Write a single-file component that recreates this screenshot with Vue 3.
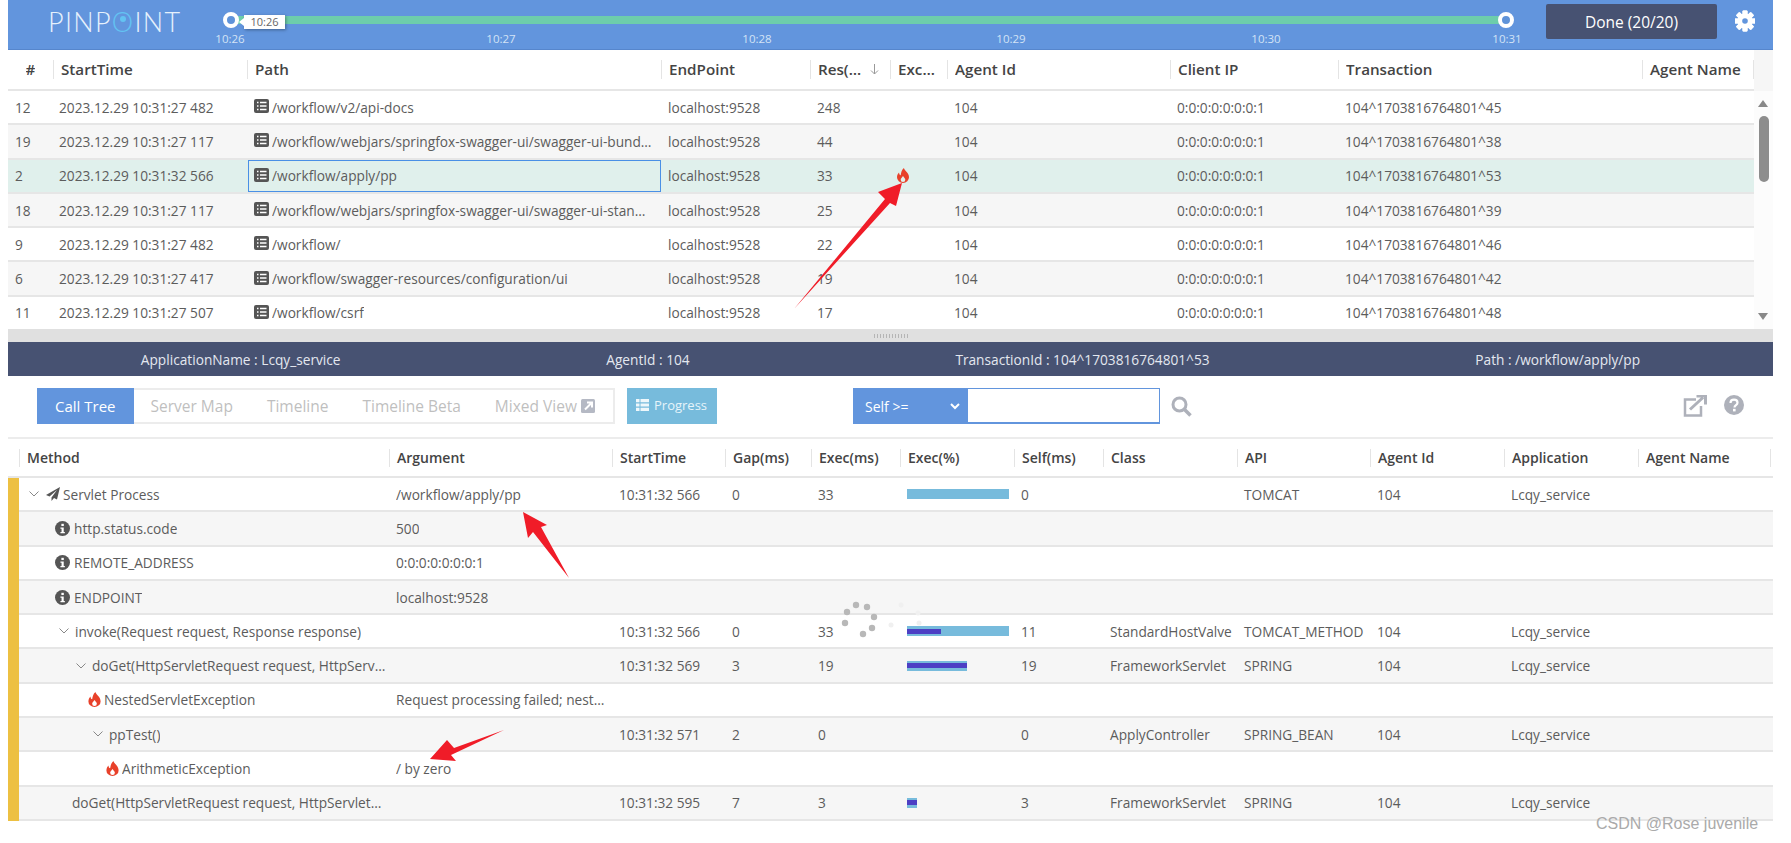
<script setup>
const ticks = [
  { t: '10:26', x: 0 },
  { t: '10:27', x: 271 },
  { t: '10:28', x: 527 },
  { t: '10:29', x: 781 },
  { t: '10:30', x: 1036 },
  { t: '10:31', x: 1277 }
]
const listHead = ['#', 'StartTime', 'Path', 'EndPoint', 'Res(ms)', 'Exception', 'Agent Id', 'Client IP', 'Transaction', 'Agent Name']
const listRows = [
  ['12', '2023.12.29 10:31:27 482', '/workflow/v2/api-docs', '248', false, '45'],
  ['19', '2023.12.29 10:31:27 117', '/workflow/webjars/springfox-swagger-ui/swagger-ui-bundle.js', '44', false, '38'],
  ['2', '2023.12.29 10:31:32 566', '/workflow/apply/pp', '33', true, '53'],
  ['18', '2023.12.29 10:31:27 117', '/workflow/webjars/springfox-swagger-ui/swagger-ui-standalone-preset.js', '25', false, '39'],
  ['9', '2023.12.29 10:31:27 482', '/workflow/', '22', false, '46'],
  ['6', '2023.12.29 10:31:27 417', '/workflow/swagger-resources/configuration/ui', '19', false, '42'],
  ['11', '2023.12.29 10:31:27 507', '/workflow/csrf', '17', false, '48']
]
const summary = ['ApplicationName : Lcqy_service', 'AgentId : 104', 'TransactionId : 104^1703816764801^53', 'Path : /workflow/apply/pp']
const tabs = ['Server Map', 'Timeline', 'Timeline Beta']
const treeHead = ['Method', 'Argument', 'StartTime', 'Gap(ms)', 'Exec(ms)', 'Exec(%)', 'Self(ms)', 'Class', 'API', 'Agent Id', 'Application', 'Agent Name']
const treeRows = [
  { pad: 10, icon: 'plane', chev: true, m: 'Servlet Process', a: '/workflow/apply/pp', s: '10:31:32 566', g: '0', e: '33', self: '0', bar: 102, dark: 0, c: '', api: 'TOMCAT', id: '104', app: 'Lcqy_service' },
  { pad: 36, icon: 'info', m: 'http.status.code', a: '500' },
  { pad: 36, icon: 'info', m: 'REMOTE_ADDRESS', a: '0:0:0:0:0:0:0:1' },
  { pad: 36, icon: 'info', m: 'ENDPOINT', a: 'localhost:9528' },
  { pad: 40, chev: true, m: 'invoke(Request request, Response response)', a: '', s: '10:31:32 566', g: '0', e: '33', self: '11', bar: 102, dark: 34, c: 'StandardHostValve', api: 'TOMCAT_METHOD', id: '104', app: 'Lcqy_service' },
  { pad: 57, chev: true, m: 'doGet(HttpServletRequest request, HttpServletResponse response)', a: '', s: '10:31:32 569', g: '3', e: '19', self: '19', bar: 60, dark: 60, c: 'FrameworkServlet', api: 'SPRING', id: '104', app: 'Lcqy_service' },
  { pad: 69, icon: 'fire', m: 'NestedServletException', a: 'Request processing failed; nested exception is java.lang.ArithmeticException' },
  { pad: 74, chev: true, m: 'ppTest()', a: '', s: '10:31:32 571', g: '2', e: '0', self: '0', bar: 0, dark: 0, c: 'ApplyController', api: 'SPRING_BEAN', id: '104', app: 'Lcqy_service' },
  { pad: 87, icon: 'fire', m: 'ArithmeticException', a: '/ by zero' },
  { pad: 53, m: 'doGet(HttpServletRequest request, HttpServletResponse response)', a: '', s: '10:31:32 595', g: '7', e: '3', self: '3', bar: 10, dark: 10, c: 'FrameworkServlet', api: 'SPRING', id: '104', app: 'Lcqy_service', tight: true }
]
const gearTeeth = [0, 45, 90, 135, 180, 225, 270, 315]
const flame = 'M7.500 0c.6 3 5.500 5 5.500 10a6.500 6 0 0 1-13 0c0-2.200 1-4 2.200-5.200.1 1.800.8 2.700 1.800 3C4.500 5 5 2 7.500 0zM6.500 8.500C5.500 10.300 4 11 4 12.500a2.500 2.500 0 0 0 5 0C9 11 7.500 10.300 6.500 8.500z'
const dots = [[856, 605], [867, 607], [874, 617], [872, 628], [863, 634], [845, 623], [847, 612]]
const faintDots = [[901, 605], [918, 613], [919, 623], [891, 625]]
</script>

<template>
  <div class="page">
    <header class="topbar">
      <div class="logo">PINP<span class="logo-o">O</span>INT</div>
      <div class="timeline">
        <div class="track"></div>
        <div class="knob knob-start"></div>
        <div class="knob knob-end"></div>
        <div class="tip">10:26</div>
        <span v-for="k in ticks" :key="k.t" class="tick" :style="{ left: k.x + 'px' }">{{ k.t }}</span>
      </div>
      <button class="done">Done (20/20)</button>
      <svg class="gear" viewBox="0 0 20 22" width="20" height="22">
        <g fill="#fff">
          <rect v-for="a in gearTeeth" :key="a" x="7.500" y="0.500" width="5" height="21" rx="1" :transform="`rotate(${a} 10 11)`" />
          <circle cx="10" cy="11" r="7.500" />
        </g>
        <circle cx="10" cy="11" r="2.800" fill="#6295dd" />
      </svg>
    </header>

    <section class="list">
      <div class="list-main">
        <div class="list-grid list-head">
          <div v-for="(h, i) in listHead" :key="h" class="hcell" :class="{ 'hcell-num': i === 0, 'hcell-last': i === 9 }">
            <span class="hlabel">{{ h }}</span>
            <svg v-if="i === 4" class="sort" viewBox="0 0 9 11" width="9" height="11"><path d="M4.500 0v10M1 6.500l3.500 3.500L8 6.500" fill="none" stroke="#999" stroke-width="1" /></svg>
          </div>
        </div>
        <div v-for="(r, i) in listRows" :key="r[0]" class="list-grid list-row" :class="{ even: i % 2 === 1, sel: r[4] }">
          <div class="cell">{{ r[0] }}</div>
          <div class="cell cell-time">{{ r[1] }}</div>
          <div class="cell path" :class="{ focus: r[4] }">
            <svg class="doc" viewBox="0 0 15 14" width="15" height="14">
              <rect width="15" height="14" rx="2" fill="#555" />
              <path d="M3 3.500h1.500M3 7h1.500M3 10.500h1.500M6 3.500h6.500M6 7h6.500M6 10.500h6.500" stroke="#fff" stroke-width="1.500" />
            </svg>
            <span class="ellip">{{ r[2] }}</span>
          </div>
          <div class="cell">localhost:9528</div>
          <div class="cell">{{ r[3] }}</div>
          <div class="cell exc">
            <svg v-if="r[4]" viewBox="0 0 13 16" width="12" height="15"><path :d="flame" fill="#e8412a" fill-rule="evenodd" /></svg>
          </div>
          <div class="cell">104</div>
          <div class="cell">0:0:0:0:0:0:0:1</div>
          <div class="cell">104^1703816764801^{{ r[5] }}</div>
          <div class="cell"></div>
        </div>
      </div>
      <div class="scroll">
        <div class="scroll-corner"></div>
        <div class="arrow-up"></div>
        <div class="thumb"></div>
        <div class="arrow-down"></div>
      </div>
    </section>

    <div class="splitter"><span class="grip"></span></div>

    <div class="summary">
      <span v-for="s in summary" :key="s">{{ s }}</span>
    </div>

    <div class="toolbar">
      <div class="tabs">
        <span class="tab active">Call Tree</span>
        <span v-for="t in tabs" :key="t" class="tab">{{ t }}</span>
        <span class="tab">Mixed View
          <svg class="tab-ico" viewBox="0 0 14 14" width="14" height="14">
            <rect width="14" height="14" rx="1.500" fill="#b5b9c4" />
            <path d="M4 10.500 10 4.500M6 3.500h5v5" fill="none" stroke="#fff" stroke-width="2" />
          </svg>
        </span>
      </div>
      <button class="progress">
        <svg viewBox="0 0 13 12" width="13" height="12"><path d="M0 0h3.500v3.200H0zM4.500 0H13v3.200H4.500zM0 4.400h3.500v3.200H0zM4.500 4.400H13v3.200H4.500zM0 8.800h3.500V12H0zM4.500 8.800H13V12H4.500z" fill="#eef7fb" /></svg>
        Progress
      </button>
      <div class="filter">
        <div class="filter-sel">
          <span>Self &gt;=</span>
          <svg viewBox="0 0 10 7" width="10" height="7"><path d="M1 1l4 4 4-4" fill="none" stroke="#fff" stroke-width="2" /></svg>
        </div>
        <div class="filter-input"></div>
      </div>
      <svg class="search" viewBox="0 0 21 21" width="21" height="21">
        <circle cx="8.500" cy="8.500" r="6.500" fill="none" stroke="#aeb1ba" stroke-width="3" />
        <path d="M13.500 13.500 19.500 19.500" stroke="#aeb1ba" stroke-width="3.500" />
      </svg>
      <div class="tool-right">
        <svg viewBox="0 0 24 22" width="24" height="22">
          <path d="M13 4.500H2v16h16V11" fill="none" stroke="#aeb1ba" stroke-width="2.500" />
          <path d="M7 14.500 20 2.500M13.500 1h9v8.500" fill="none" stroke="#aeb1ba" stroke-width="3" />
        </svg>
        <svg viewBox="0 0 20 20" width="20" height="20">
          <circle cx="10" cy="10" r="10" fill="#aeb1ba" />
          <path d="M6.500 8c0-2 1.500-3.300 3.500-3.300S13.500 6 13.500 7.800c0 2.400-3 2.400-3 4.700" fill="none" stroke="#fff" stroke-width="2.200" />
          <rect x="9" y="13.800" width="2.600" height="2.600" fill="#fff" />
        </svg>
      </div>
    </div>

    <section class="tree">
      <div class="tree-grid tree-head">
        <div class="bar-gap"></div>
        <div v-for="h in treeHead" :key="h" class="thcell">{{ h }}</div>
      </div>
      <div v-for="(r, i) in treeRows" :key="i" class="tree-grid tree-row" :class="{ even: i % 2 === 1 }">
        <div class="yellow"></div>
        <div class="cell method" :class="{ tight: r.tight }" :style="{ paddingLeft: r.pad + 'px' }">
          <svg v-if="r.chev" class="chev" viewBox="0 0 10 6" width="10" height="6"><path d="M.5.500 5 5 9.500.500" fill="none" stroke="#888" stroke-width="1" /></svg>
          <svg v-if="r.icon === 'plane'" class="plane" viewBox="0 0 14 14" width="14" height="14"><path d="M14 0 0 8l3.500 1.500L11 3 5.500 10.500V14l2.500-3 3 1.500z" fill="#555" /></svg>
          <svg v-if="r.icon === 'info'" class="info" viewBox="0 0 16 16" width="15" height="15">
            <circle cx="8" cy="8" r="8" fill="#555" />
            <rect x="6.800" y="3" width="2.600" height="2.400" fill="#fff" />
            <path d="M5.800 6.800h3.500v4.800h1.200V13H5.800v-1.400H7V8.200H5.800z" fill="#fff" />
          </svg>
          <svg v-if="r.icon === 'fire'" class="fire" viewBox="0 0 13 16" width="13" height="15"><path :d="flame" fill="#e8412a" fill-rule="evenodd" /></svg>
          <span class="ellip">{{ r.m }}</span>
        </div>
        <div class="cell arg"><span class="ellip">{{ r.a }}</span></div>
        <div class="cell">{{ r.s }}</div>
        <div class="cell">{{ r.g }}</div>
        <div class="cell">{{ r.e }}</div>
        <div class="cell">
          <div v-if="r.bar" class="bar" :style="{ width: r.bar + 'px' }">
            <div class="bar-in" :style="{ width: r.dark + 'px' }"></div>
          </div>
        </div>
        <div class="cell">{{ r.self }}</div>
        <div class="cell">{{ r.c }}</div>
        <div class="cell">{{ r.api }}</div>
        <div class="cell">{{ r.id }}</div>
        <div class="cell">{{ r.app }}</div>
        <div class="cell"></div>
      </div>
    </section>

    <svg class="overlay" viewBox="0 0 1791 843" width="1791" height="843">
      <circle v-for="(d, i) in faintDots" :key="'f' + i" :cx="d[0]" :cy="d[1]" r="2.500" fill="#f0f0f0" />
      <circle v-for="(d, i) in dots" :key="'d' + i" :cx="d[0]" :cy="d[1]" r="3.200" fill="#b8b8b8" />
      <g fill="#f01c28">
        <polygon points="794,309 885,199 878,192 902,183 896,206 890,203" />
        <polygon points="523,512 547,525 541,527 569,578 533,532 528,538" />
        <polygon points="504,730 454,748 447,740 430,759 456,761 451,755" />
      </g>
    </svg>
    <div class="watermark">CSDN @Rose juvenile</div>
  </div>
</template>

<style>
body { margin: 0; background: #fff; overflow: hidden; }
</style>

<style scoped>
.page {
  position: relative;
  width: 1791px;
  height: 843px;
  padding: 0 18px 0 8px;
  box-sizing: border-box;
  overflow: hidden;
  font-family: "Open Sans", "Noto Sans", sans-serif;
  font-size: 13.7px;
  color: #5c5c5c;
}
.topbar {
  height: 50px;
  box-sizing: border-box;
  background: #6295dd;
  border-bottom: 1px solid #5686cc;
  display: flex;
  align-items: flex-start;
}
.logo {
  margin: 8px 0 0 40px;
  width: 182px;
  font-family: "Lato", sans-serif;
  font-weight: 300;
  font-size: 27px;
  letter-spacing: 1.300px;
  line-height: 28px;
  color: #e6f1fc;
  flex: none;
}
.logo-o { color: #63c3f2; position: relative; }
.logo-o::after {
  content: "";
  position: absolute;
  left: 8px;
  top: 11px;
  width: 6px;
  height: 6px;
  border-radius: 50%;
  background: #63c3f2;
}
.timeline { position: relative; flex: 1; height: 49px; }
.track {
  position: absolute;
  left: 1px;
  top: 16px;
  width: 1275px;
  height: 8px;
  background: #6dcdab;
}
.knob {
  position: absolute;
  top: 12px;
  width: 8px;
  height: 8px;
  border: 4px solid #fff;
  border-radius: 50%;
  background: #5f93d9;
}
.knob-start { left: -7px; }
.knob-end { left: 1268px; }
.tip {
  position: absolute;
  left: 14px;
  top: 15px;
  width: 41px;
  height: 14px;
  line-height: 14px;
  background: #fff;
  color: #666;
  text-align: center;
  font-size: 11px;
  box-shadow: 1px 1px 3px rgba(0, 0, 0, .35);
}
.tip::before {
  content: "";
  position: absolute;
  left: -5px;
  top: 3px;
  border-right: 5px solid #fff;
  border-top: 4px solid transparent;
  border-bottom: 4px solid transparent;
}
.tick {
  position: absolute;
  top: 31px;
  width: 0;
  display: flex;
  justify-content: center;
  font-size: 11.500px;
  line-height: 16px;
  color: #d3e3f6;
}
.done {
  flex: none;
  margin: 4px 0 0 0;
  width: 171px;
  height: 35px;
  background: #475272;
  border: 0;
  border-radius: 2px;
  color: #fff;
  font: 400 15.500px "Open Sans", sans-serif;
  padding: 0;
}
.gear { flex: none; margin: 10px 18px 0 18px; }

.list { display: flex; height: 279px; overflow: hidden; }
.list-main { width: 1746px; flex: none; }
.list-grid {
  display: grid;
  grid-template-columns: 45px 194px 414px 149px 80px 57px 223px 168px 304px 112px;
}
.list-head {
  height: 41px;
  box-sizing: border-box;
  border-bottom: 2px solid #e6e6e6;
  align-items: center;
  background: #fff;
}
.hcell {
  height: 19px;
  line-height: 19px;
  border-left: 1px solid #e4e4e4;
  padding: 0 6px 0 7px;
  font-size: 15.200px;
  font-weight: 600;
  color: #444;
  display: flex;
  align-items: center;
  min-width: 0;
}
.hlabel { overflow: hidden; text-overflow: ellipsis; white-space: nowrap; flex: 0 1 auto; min-width: 0; }
.hcell-num { border-left: 0; justify-content: center; padding: 0; }
.hcell-last { border-right: 1px solid #e4e4e4; white-space: nowrap; }
.hcell-last .hlabel { overflow: visible; }
.sort { flex: none; margin-left: 6px; }
.hcell:nth-child(5) { padding-right: 6px; }
.hcell:nth-child(5) .hlabel { width: 46px; flex: none; }
.list-row {
  height: 34.300px;
  box-sizing: border-box;
  border-bottom: 2px solid #e6e6e6;
  background: #fff;
}
.list-row.even { background: #f6f6f6; }
.list-row.sel { background: #e0f0ec; }
.cell {
  min-width: 0;
  padding-left: 7px;
  display: flex;
  align-items: center;
  white-space: nowrap;
}
.cell-time { padding-left: 6px; }
.path {
  padding-left: 5px;
  padding-right: 8px;
  margin-left: 1px;
  border: 1px solid transparent;
}
.path.focus { border-color: #4a90e6; }
.doc { flex: none; margin-right: 3px; margin-top: -2px; }
.ellip { overflow: hidden; text-overflow: ellipsis; white-space: nowrap; min-width: 0; }
.exc { justify-content: flex-start; padding-left: 7px; }
.scroll {
  position: relative;
  width: 19px;
  flex: none;
  background: #fcfcfc;
}
.scroll-corner { position: absolute; left: 0; top: 0; width: 100%; height: 41px; background: #f6f6f6; }
.arrow-up, .arrow-down {
  position: absolute;
  left: 4px;
  border-left: 5px solid transparent;
  border-right: 5px solid transparent;
}
.arrow-up { top: 50px; border-bottom: 7px solid #888; }
.arrow-down { top: 263px; border-top: 7px solid #888; }
.thumb {
  position: absolute;
  left: 5px;
  top: 66px;
  width: 10px;
  height: 66px;
  border-radius: 5px;
  background: #8d8d8d;
}

.splitter {
  height: 13px;
  background: #e0e0e0;
  display: flex;
  align-items: center;
  justify-content: center;
  padding-right: 1px;
}
.grip {
  width: 35px;
  height: 4px;
  background-image: radial-gradient(circle, #b5b5b5 0.800px, transparent 1px);
  background-size: 3px 2px;
}
.summary {
  height: 34px;
  background: #475272;
  color: #e4e8f0;
  display: flex;
  justify-content: space-around;
  align-items: center;
  font-size: 13.700px;
}
.toolbar {
  height: 61px;
  box-sizing: border-box;
  padding: 12px 0 0 29px;
  display: flex;
  align-items: flex-start;
}
.tabs {
  display: flex;
  height: 36px;
  box-sizing: border-box;
  border: 2px solid #ececec;
  border-left: 0;
  width: 578px;
  flex: none;
}
.tab {
  padding: 0 17px;
  line-height: 33px;
  font-size: 15.500px;
  color: #bfbfbf;
  white-space: nowrap;
  display: flex;
  align-items: center;
  gap: 4px;
}
.tab.active {
  background: #6295dd;
  color: #fff;
  margin: -2px 0;
  padding: 0 18px;
  line-height: 36px;
  font-size: 15px;
}
.tab-ico { flex: none; }
.progress {
  flex: none;
  margin-left: 12px;
  width: 90px;
  height: 36px;
  background: #77bbdc;
  border: 0;
  padding: 0 0 3px 9px;
  display: flex;
  align-items: center;
  gap: 5px;
  font: 400 13px "Open Sans", sans-serif;
  color: #e6f4fa;
}
.filter { display: flex; margin-left: 136px; height: 36px; flex: none; }
.filter-sel {
  width: 115px;
  background: #6295dd;
  color: #fff;
  box-sizing: border-box;
  padding: 0 8px 0 12px;
  display: flex;
  align-items: center;
  justify-content: space-between;
  font-size: 14px;
}
.filter-input {
  width: 192px;
  box-sizing: border-box;
  border: 1px solid #6295dd;
  border-bottom-width: 2px;
  border-left: 0;
}
.search { flex: none; margin: 8px 0 0 11px; }
.tool-right {
  margin-left: auto;
  margin-right: 29px;
  padding-top: 7px;
  display: flex;
  gap: 17px;
}

.tree-grid {
  display: grid;
  grid-template-columns: 11px 370px 223px 113px 86px 89px 114px 89px 134px 133px 134px 134px 133px;
}
.tree-head {
  height: 41px;
  box-sizing: border-box;
  border-top: 2px solid #ececec;
  border-bottom: 2px solid #e6e6e6;
  align-items: center;
}
.thcell {
  height: 18px;
  line-height: 18px;
  border-left: 1px solid #e4e4e4;
  padding-left: 7px;
  font-size: 14px;
  font-weight: 600;
  color: #444;
  white-space: nowrap;
}
.thcell:last-child { border-right: 1px solid #e4e4e4; }
.tree-row {
  height: 34.300px;
  box-sizing: border-box;
  border-bottom: 2px solid #e6e6e6;
  background: #fff;
}
.tree-row.even { background: #f6f6f6; }
.yellow { background: #edc042; margin-bottom: -2px; }
.chev { flex: none; margin-right: 6px; }
.plane { flex: none; margin: 0 3px 0 1px; }
.info { flex: none; margin-right: 4px; }
.fire { flex: none; margin-right: 3px; }
.arg { padding-right: 5px; }
.method { padding-right: 2px; }
.method.tight { padding-right: 6px; }
.bar {
  height: 10px;
  background: #77bbdc;
  display: flex;
  align-items: center;
}
.bar-in { height: 5px; background: #4c3fc4; }

.overlay { position: absolute; left: 0; top: 0; pointer-events: none; }
.watermark {
  position: absolute;
  left: 1596px;
  top: 813px;
  font-family: "Liberation Sans", Arial, sans-serif;
  font-size: 16px;
  line-height: 22px;
  color: #aaa;
  white-space: nowrap;
}
</style>
